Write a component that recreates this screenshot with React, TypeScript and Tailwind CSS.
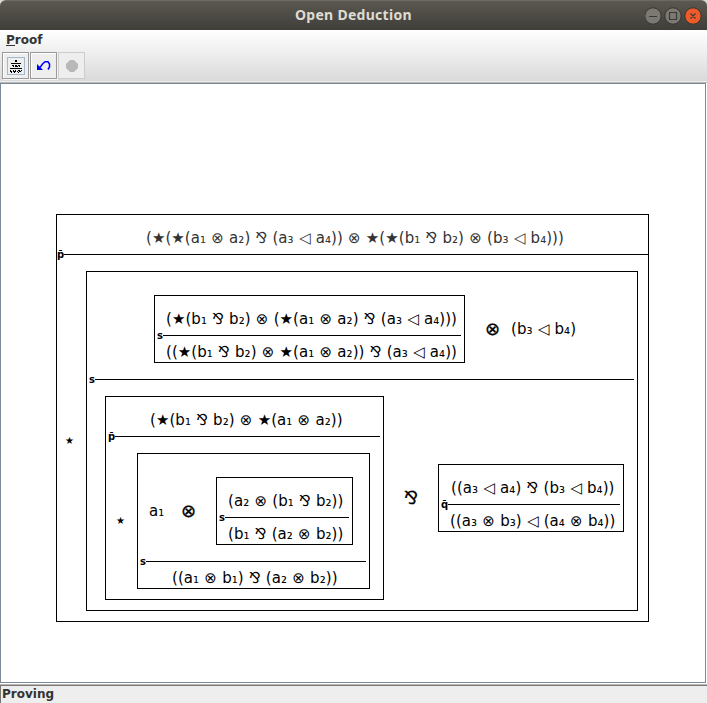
import type { ReactNode } from "react";

type BoxProps = {
  size: string;
  top: string;
  label: string;
  ruleClass: string;
  upper: ReactNode;
  lower: ReactNode;
};

function Formula({ children, className = "" }: { children: string; className?: string }) {
  return (
    <span className={`block whitespace-pre text-[15px] leading-[18px] tracking-[0.06px] [word-spacing:0.36px] ${className}`}>
      {children}
    </span>
  );
}

function Derivation({ size, top, label, ruleClass, upper, lower }: BoxProps) {
  return (
    <div className={`flex shrink-0 flex-col border border-black ${size}`}>
      <div className={`flex shrink-0 ${top}`}>{upper}</div>
      <div className={`flex h-px shrink-0 items-center ${ruleClass}`}>
        <span className="block h-3 shrink-0 text-[10px] leading-3 font-bold">{label}</span>
        <span className="block h-px flex-1 bg-black" />
      </div>
      <div className="flex min-h-0 flex-1">{lower}</div>
    </div>
  );
}

const px = (rows: string[], color: string) =>
  rows.flatMap((row, y) =>
    [...row].map((c, x) => (c === "#" ? <rect key={`${x}-${y}`} x={x} y={y} width="1" height="1" fill={color} /> : null)),
  );

export default function App() {
  return (
    <div className="flex h-[703px] w-[707px] flex-col overflow-hidden bg-[#eeeeee] font-['DejaVu_Sans',sans-serif] text-black">
      <div className="h-[30px] shrink-0 bg-[#d8d8d8]">
        <header className="flex h-[30px] items-center rounded-t-md border-t border-[#6b6961] bg-linear-to-b from-[#5b5850] to-[#3f3e39] pl-[295px]">
          <h1 className="w-[350px] pb-[2px] font-['Noto_Sans',sans-serif] text-[14px] leading-5 font-bold tracking-[0.28px] text-[#dfdbd2]">
            Open Deduction
          </h1>
          <svg width="60" height="20" viewBox="0 0 60 20" fill="none">
            <circle cx="8" cy="10" r="8.2" fill="#7b7971" stroke="#35342f" />
            <circle cx="28" cy="10" r="8.2" fill="#7b7971" stroke="#35342f" />
            <circle cx="48" cy="10" r="8.2" fill="#ec5b29" stroke="#35342f" />
            <path d="M4 10.5h8M24.5 6.5h7v7h-7zM45.500 7.500l5 5m0-5l-5 5" stroke="#3c3b37" strokeWidth="1.2" />
          </svg>
        </header>
      </div>
      <div className="flex h-[51px] shrink-0 flex-col bg-linear-to-b from-white to-[#dadada]">
        <div className="flex h-[22px] pl-[6px] text-[12px] leading-5 font-bold text-[#333333]">
          <span className="h-[16px] border-b border-[#333333]">P</span>
          <span>roof</span>
        </div>
        <div className="flex gap-px pl-[2px]">
          <div className="flex size-[27px] border border-[#999999] bg-[#eeeeee] pt-1 pl-1 shadow-[inset_1px_1px_0_#fff,1px_1px_0_#f5f5f5]">
            <svg width="18" height="18" viewBox="0 0 18 18" shapeRendering="crispEdges">
              <rect x=".5" y=".5" width="17" height="17" fill="#eee" stroke="#a3b8cc" />
              {px(["", "", "", "        ##", "        ##", "", "    ##########", "", "     ## ## ##", "      # ### #", "", "   ############", "", "   #  # #  ## #", "   ## ### # ##", "    #  #   #"], "#000")}
            </svg>
          </div>
          <div className="flex size-[27px] border border-[#999999] bg-[#eeeeee] pt-[7px] pl-[6px] shadow-[inset_1px_1px_0_#fff,1px_1px_0_#f5f5f5]">
            <svg width="14" height="12" viewBox="0 0 14 12" fill="none">
              <path d="M3 7.500L5.500 4L8 1.800H11L12.500 4V7L11 9.500" stroke="#0000ff" strokeWidth="1.5" />
              <path d="M0 4V10H6Z" fill="#0000ff" />
            </svg>
          </div>
          <div className="flex size-[27px] border border-[#cccccc] bg-[#eeeeee] pt-[7px] pl-[7px]">
            <svg width="12" height="12" viewBox="0 0 12 12">
              <path d="M4 0h4l4 4v4L8 12H4L0 8V4z" fill="#b8b8b8" />
            </svg>
          </div>
        </div>
      </div>
      <div className="h-[2px] shrink-0 border-b border-[#b8b8b8] bg-[#eee]" />
      <div className="flex h-[601px] shrink-0 bg-white">
        <main className="flex h-[600px] w-[706px] border border-[#7a8a99] bg-white pt-[130px] pl-[55px]">
          <Derivation
            size="h-[408px] w-[593px]"
            top="h-[39px] pl-[89px] pt-[14px] text-[#333333]"
            label="p̄"
            ruleClass=""
            upper={<Formula>(★(★(a₁ ⊗ a₂) ⅋ (a₃ ◁ a₄)) ⊗ ★(★(b₁ ⅋ b₂) ⊗ (b₃ ◁ b₄)))</Formula>}
            lower={
              <div className="flex pt-4">
                <span className="w-[29px] pt-[164px] pl-2 text-[10px] leading-3">★</span>
                <Derivation
                  size="h-[340px] w-[552px]"
                  top="h-[107px] pt-[23px] pl-[67px]"
                  label="s"
                  ruleClass="pl-[2px] pr-[3px]"
                  upper={
                    <>
                      <Derivation
                        size="h-[68px] w-[311px]"
                        top="h-[39px] pt-[14px] pl-[11px]"
                        label="s"
                        ruleClass="pl-[2px] pr-[3px]"
                        upper={<Formula>(★(b₁ ⅋ b₂) ⊗ (★(a₁ ⊗ a₂) ⅋ (a₃ ◁ a₄)))</Formula>}
                        lower={<Formula className="pt-[7px] pl-[11px]">((★(b₁ ⅋ b₂) ⊗ ★(a₁ ⊗ a₂)) ⅋ (a₃ ◁ a₄))</Formula>}
                      />
                      <span className="w-[46px] pt-[24px] pl-[20px] text-[18px] leading-5 [-webkit-text-stroke:0.3px_black]">⊗</span>
                      <Formula className="pt-[25px]">(b₃ ◁ b₄)</Formula>
                    </>
                  }
                  lower={
                    <div className="flex pt-4 pl-[18px]">
                      <Derivation
                        size="h-[204px] w-[279px]"
                        top="h-[39px] pt-[14px] pl-[44px]"
                        label="p̄"
                        ruleClass="pl-[2px] pr-[3px]"
                        upper={<Formula>(★(b₁ ⅋ b₂) ⊗ ★(a₁ ⊗ a₂))</Formula>}
                        lower={
                          <div className="flex pt-4">
                            <span className="w-[31px] pt-[62px] pl-[10px] text-[10px] leading-3">★</span>
                            <Derivation
                              size="h-[136px] w-[233px]"
                              top="h-[107px] pt-[23px]"
                              label="s"
                              ruleClass="pl-[2px] pr-[3px]"
                              upper={
                                <>
                                  <Formula className="w-[43px] pt-[25px] pl-[11px]">a₁</Formula>
                                  <span className="w-[35px] pt-[24px] text-[18px] leading-5 [-webkit-text-stroke:0.3px_black]">⊗</span>
                                  <Derivation
                                    size="h-[68px] w-[137px]"
                                    top="h-[39px] pt-[14px] pl-[11px]"
                                    label="s"
                                    ruleClass="pl-[2px] pr-[3px]"
                                    upper={<Formula>(a₂ ⊗ (b₁ ⅋ b₂))</Formula>}
                                    lower={<Formula className="pt-[7px] pl-[11px]">(b₁ ⅋ (a₂ ⊗ b₂))</Formula>}
                                  />
                                </>
                              }
                              lower={<Formula className="pt-[7px] pl-[34px]">((a₁ ⊗ b₁) ⅋ (a₂ ⊗ b₂))</Formula>}
                            />
                          </div>
                        }
                      />
                      <span className="w-[54px] pt-[92px] pl-[20px] text-[18px] leading-5 [-webkit-text-stroke:0.2px_black]">⅋</span>
                      <div className="pt-[68px]">
                        <Derivation
                          size="h-[68px] w-[186px]"
                          top="h-[39px] pt-[14px] pl-[12px]"
                          label="q̄"
                          ruleClass="pl-[2px] pr-[3px]"
                          upper={<Formula>((a₃ ◁ a₄) ⅋ (b₃ ◁ b₄))</Formula>}
                          lower={<Formula className="pt-[7px] pl-[11px]">((a₃ ⊗ b₃) ◁ (a₄ ⊗ b₄))</Formula>}
                        />
                      </div>
                    </div>
                  }
                />
              </div>
            }
          />
        </main>
      </div>
      <footer className="h-[19px] shrink-0 border-t border-[#b8b8b8]">
        <div className="h-[18px] border-t border-l border-[#777777] pl-px text-[12px] leading-4 font-bold text-[#333333]">Proving</div>
      </footer>
    </div>
  );
}
